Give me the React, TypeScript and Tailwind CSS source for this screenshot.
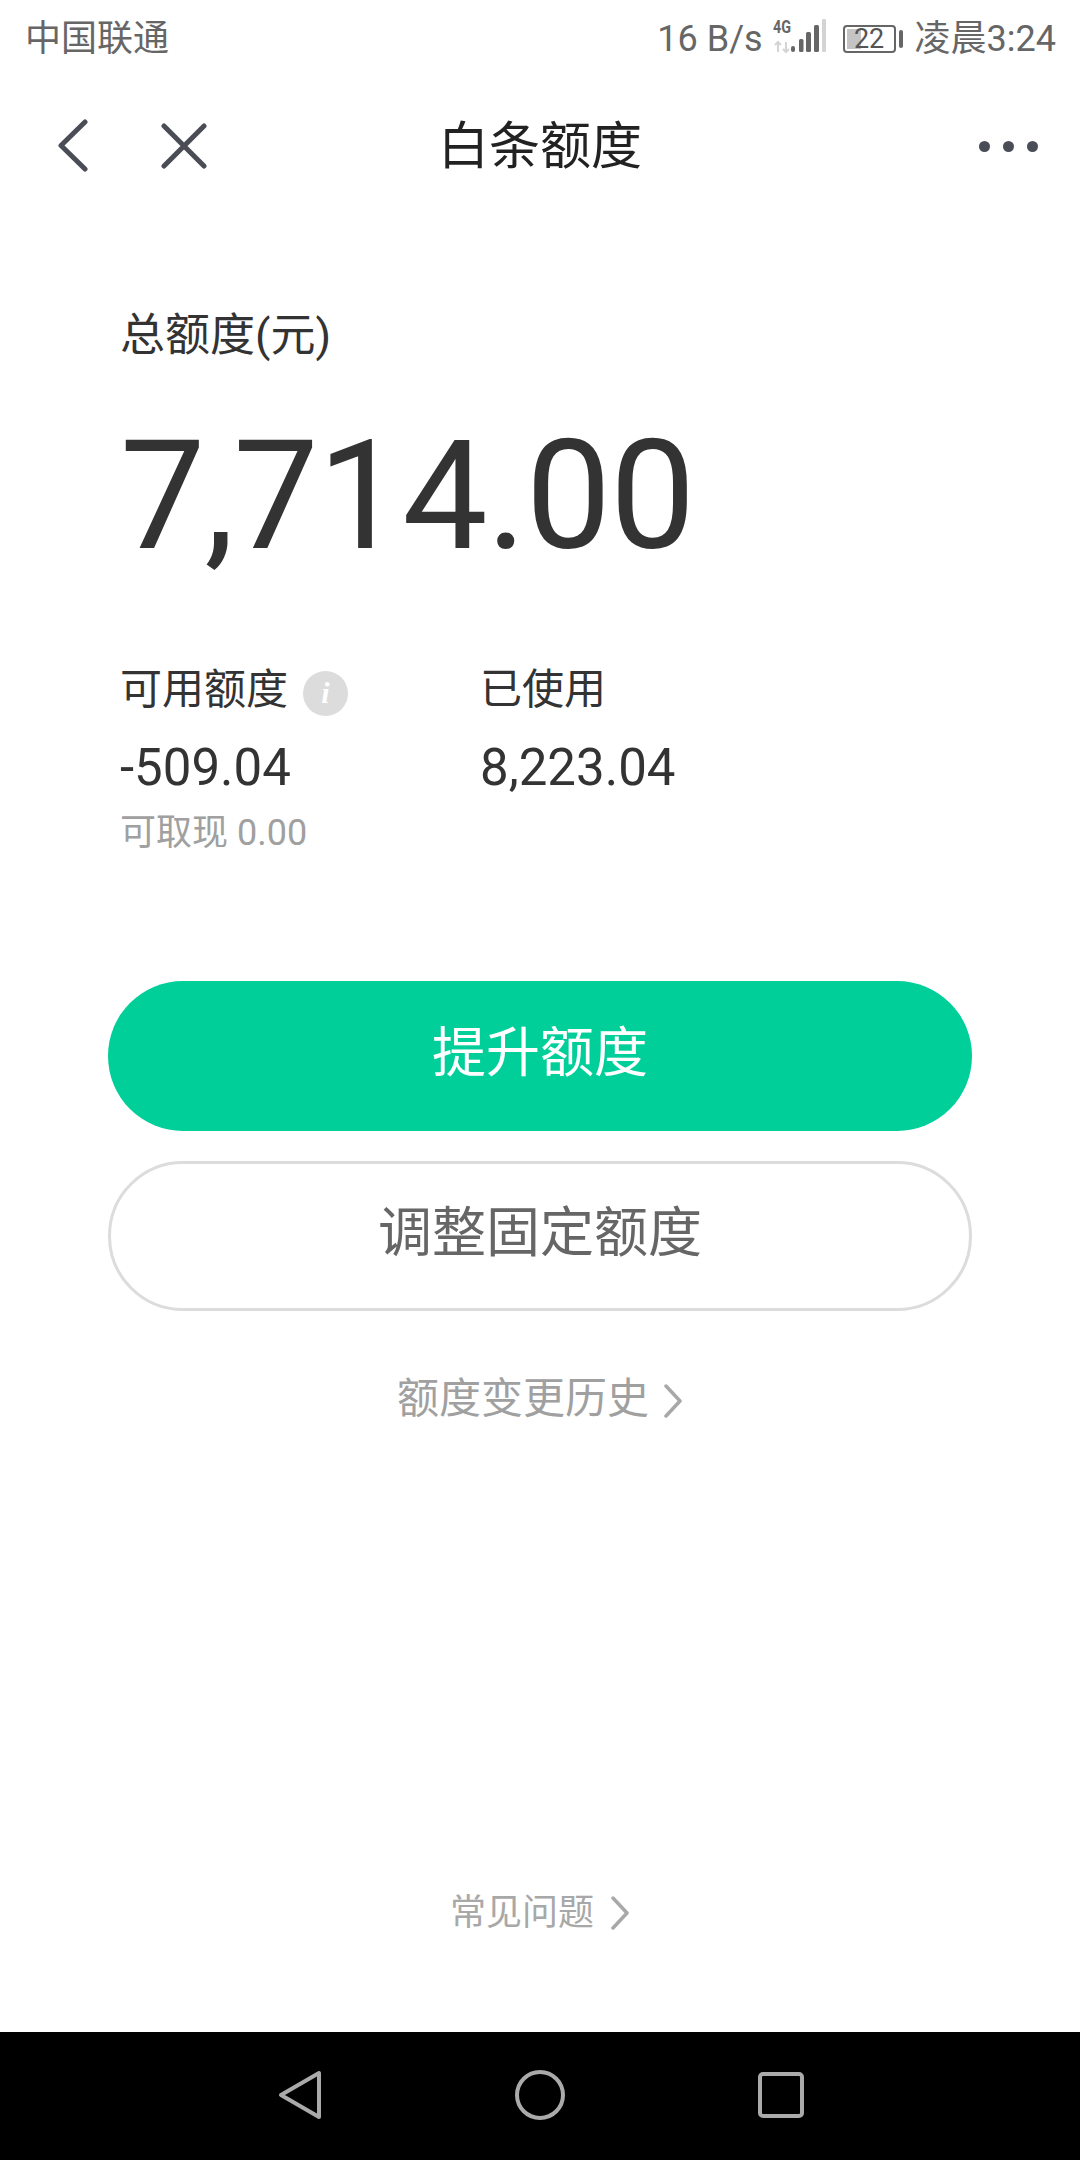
const font = "font-['Roboto','Noto_Sans_CJK_SC',sans-serif]";

function SignalIcon() {
  return (
    <svg width="53" height="38" viewBox="0 -4 53 38" className="mb-[10px] shrink-0">
      <text x="0" y="14" fontFamily="Roboto" fontWeight="700" fontSize="18" fill="#666" textLength="18" lengthAdjust="spacingAndGlyphs">4G</text>
      <path d="M5 23v10M2 26l3-3 3 3M13 23v10M10 30l3 3 3-3" stroke="#d4d4d4" strokeWidth="2" fill="none" />
      <rect x="18" y="27" width="4" height="6" rx="2" fill="#666" />
      <rect x="26" y="20" width="4.5" height="13" rx="1.5" fill="#666" />
      <rect x="33" y="13" width="5" height="20" rx="1.5" fill="#666" />
      <rect x="41" y="6" width="5" height="27" rx="1.5" fill="#666" />
      <rect x="49" y="0" width="4" height="33" rx="1" fill="#d4d4d4" />
    </svg>
  );
}

function BatteryIcon() {
  return (
    <div className="flex items-center gap-[3px]">
      <div className="relative flex h-[28px] w-[53px] items-center justify-center rounded-[4px] border-2 border-[#666]">
        <div className="absolute inset-y-[2px] left-[2px] w-[14px] bg-[#c4c4c4]" />
        <span className="relative text-[27px] leading-none text-[#555]">22</span>
      </div>
      <div className="h-[18px] w-[4px] rounded-[2px] bg-[#666]" />
    </div>
  );
}

function Chevron({ color, className }: { color: string; className?: string }) {
  return (
    <svg width="20" height="34" viewBox="0 0 20 34" fill="none" stroke={color} strokeWidth="3.5" strokeLinecap="round" strokeLinejoin="round" className={className}>
      <path d="M3 2l14 15L3 32" />
    </svg>
  );
}

export default function App() {
  return (
    <div className={`flex h-[2160px] w-[1080px] flex-col bg-white ${font}`}>
      {/* status bar */}
      <div className="flex h-[76px] items-center justify-between pl-[25px] pr-[24px] pt-[2px] text-[36px] text-[#666]">
        <span>中国联通</span>
        <div className="flex items-center">
          <span className="mr-[10px] text-[36px]">16 B/s</span>
          <SignalIcon />
          <div className="ml-[17px] mr-[12px]">
            <BatteryIcon />
          </div>
          <span className="text-[36px]">凌晨3:24</span>
        </div>
      </div>

      {/* title bar */}
      <div className="relative flex h-[140px] items-center justify-center">
        <div className="absolute left-[57px] top-[43px] flex items-center gap-[73px]">
          <svg width="31" height="53" viewBox="0 0 31 53" fill="none" stroke="#4a4d55" strokeWidth="5" strokeLinecap="round" strokeLinejoin="round">
            <path d="M28 3L4 26.5 28 50" />
          </svg>
          <svg width="46" height="46" viewBox="0 0 46 46" fill="none" stroke="#4a4d55" strokeWidth="5" strokeLinecap="round">
            <path d="M3 3l40 40M43 3L3 43" />
          </svg>
        </div>
        <span className="pt-[3px] text-[51px] text-[#222]">白条额度</span>
        <div className="absolute right-[42px] top-[65px] flex gap-[13px]">
          <div className="size-[11px] rounded-full bg-[#4a4d55]" />
          <div className="size-[11px] rounded-full bg-[#4a4d55]" />
          <div className="size-[11px] rounded-full bg-[#4a4d55]" />
        </div>
      </div>

      {/* amounts */}
      <div className="pl-[120px] pt-[90px]">
        <div className="text-[45px] leading-[60px] text-[#333]">总额度(元)</div>
        <div className="mt-[45px] text-[152px] leading-[170px] tracking-[-1px] text-[#333]">7,714.00</div>
        <div className="mt-[79px] flex">
          <div className="w-[360px]">
            <div className="flex items-center text-[42px] leading-[60px] text-[#333]">
              可用额度
              <span className="ml-[15px] mt-[6px] flex size-[45px] items-center justify-center rounded-full bg-[#dcdcdc] font-['Liberation_Serif',serif] text-[30px] font-bold italic leading-none text-white">
                i
              </span>
            </div>
            <div className="mt-[18px] text-[51px] leading-[60px] text-[#333]">-509.04</div>
            <div className="mt-[10px] text-[36px] leading-[50px] text-[#a0a0a0]">可取现 0.00</div>
          </div>
          <div>
            <div className="text-[42px] leading-[60px] text-[#333]">已使用</div>
            <div className="mt-[18px] text-[51px] leading-[60px] text-[#333]">8,223.04</div>
          </div>
        </div>
      </div>

      {/* buttons */}
      <div className="mt-[123px] flex flex-col items-center gap-[30px]">
        <div className="flex h-[150px] w-[864px] items-center justify-center rounded-full bg-[#00cf9a] pb-[6px] text-[54px] text-white">
          提升额度
        </div>
        <div className="flex h-[150px] w-[864px] items-center justify-center rounded-full border-[3px] border-[#dcdcdc] pb-[6px] text-[54px] text-[#666]">
          调整固定额度
        </div>
      </div>

      <div className="mt-[56px] flex items-center justify-center gap-[14px] text-[42px] leading-[60px] text-[#a0a0a0]">
        <span className="pt-[2px]">额度变更历史</span>
        <Chevron color="#a8a8a8" className="mt-[6px]" />
      </div>

      <div className="flex-1" />

      <div className="mb-[94px] flex items-center justify-center gap-[16px] text-[36px] leading-[50px] text-[#a8a8a8]">
        常见问题
        <Chevron color="#a8a8a8" />
      </div>

      {/* android nav bar */}
      <div className="flex h-[128px] items-center justify-center gap-[193px] bg-black pb-[2px] pl-[1px]">
        <svg width="44" height="50" viewBox="0 0 44 50" fill="none" stroke="#aaa" strokeWidth="4" strokeLinejoin="round">
          <path d="M41 3v44L3 25z" />
        </svg>
        <svg width="50" height="50" viewBox="0 0 50 50" fill="none" stroke="#aaa" strokeWidth="4">
          <circle cx="25" cy="25" r="23" />
        </svg>
        <svg width="46" height="46" viewBox="0 0 46 46" fill="none" stroke="#aaa" strokeWidth="4">
          <rect x="2" y="2" width="42" height="42" rx="3" />
        </svg>
      </div>
    </div>
  );
}
